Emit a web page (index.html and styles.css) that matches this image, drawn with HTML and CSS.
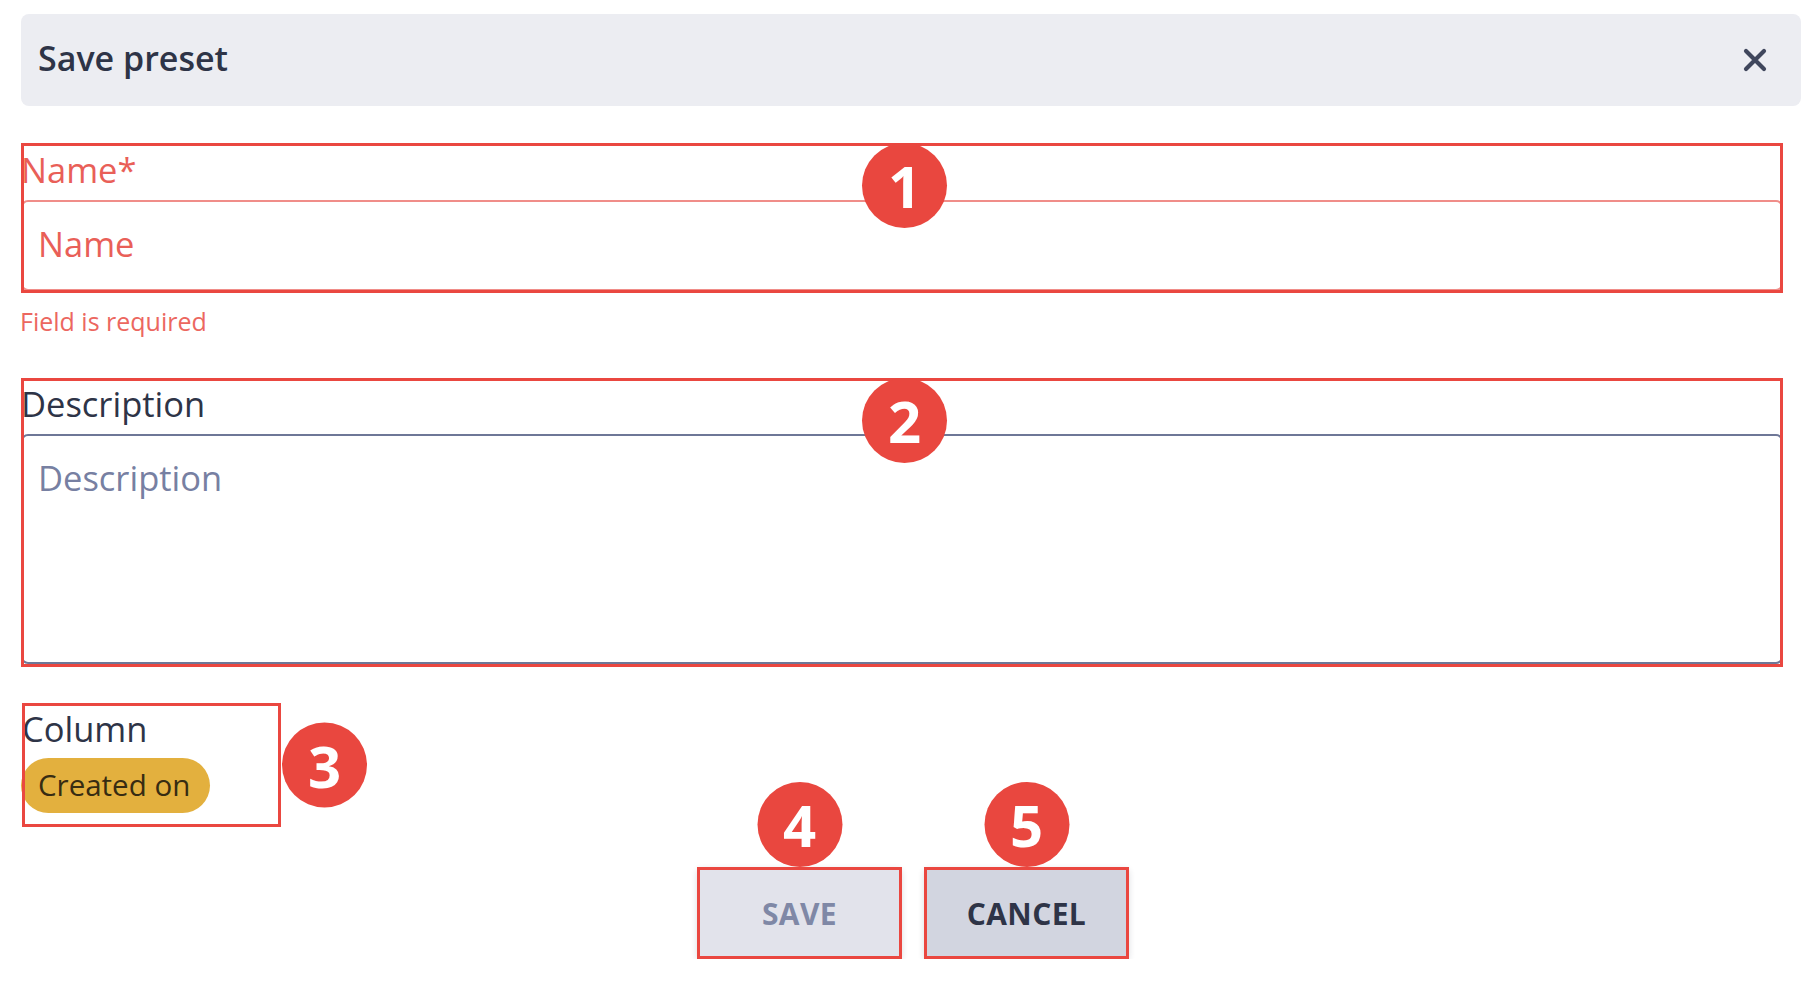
FILE: index.html
```html
<!DOCTYPE html>
<html lang="en">
<head>
<meta charset="utf-8">
<title>Save preset</title>
<link rel="stylesheet" href="styles.css">
</head>
<body>
<div class="modal">
  <header class="modal-header">
    <h1 class="modal-title">Save preset</h1>
    <button class="close-btn" aria-label="Close">
      <svg width="24" height="24" viewBox="0 0 24 24"><path d="M3 3 L21 21 M21 3 L3 21" stroke="#3f465c" stroke-width="4.2" stroke-linecap="round" fill="none"/></svg>
    </button>
  </header>

  <form class="form">
    <div class="mark field field-name">
      <label class="label label-name label-error">Name*</label>
      <input class="input input-error" type="text" placeholder="Name">
      <span class="badge badge-top">1</span>
    </div>
    <div class="error-text">Field is required</div>

    <div class="mark field field-desc">
      <label class="label label-desc">Description</label>
      <textarea class="textarea" placeholder="Description"></textarea>
      <span class="badge badge-top">2</span>
    </div>

    <div class="mark field-column">
      <div class="label label-column">Column</div>
      <span class="chip">Created on</span>
      <span class="badge badge-side">3</span>
    </div>

    <div class="actions">
      <div class="mark btn-wrap">
        <button type="button" class="btn btn-save">SAVE</button>
        <span class="badge badge-above">4</span>
      </div>
      <div class="mark btn-wrap">
        <button type="button" class="btn btn-cancel">CANCEL</button>
        <span class="badge badge-above">5</span>
      </div>
    </div>
  </form>
</div>
</body>
</html>
```

FILE: styles.css
```css
* { box-sizing: border-box; }

html, body {
  margin: 0;
  padding: 0;
  background: #ffffff;
}

body {
  font-family: "Open Sans", "Noto Sans", sans-serif;
  color: #2e3447;
}

.modal {
  padding: 14px 5px 0 21px;
}

/* ---------- header ---------- */
.modal-header {
  height: 92px;
  background: #ecedf2;
  border-radius: 8px;
  display: flex;
  align-items: center;
  justify-content: space-between;
  padding: 0 34px 4px 17px;
}

.modal-title {
  margin: 0;
  font-size: 34px;
  font-weight: 600;
  line-height: 46px;
  color: #2e3447;
}

.close-btn {
  border: 0;
  background: transparent;
  padding: 0;
  margin-top: 4px;
  width: 24px;
  height: 24px;
  display: flex;
  cursor: pointer;
}

/* ---------- form ---------- */
.form {
  width: 1762px;
  display: flex;
  flex-direction: column;
  align-items: flex-start;
  padding-top: 37px;
}

/* red annotation frame drawn over the field edges */
.mark {
  position: relative;
  outline: 3px solid #ea4740;
  outline-offset: -3px;
}

.field {
  width: 100%;
  display: flex;
  flex-direction: column;
}

.field-name {
  padding-bottom: 2px;
}

.field-desc {
  margin-top: 41px;
  padding-bottom: 3px;
}

.label {
  display: block;
  font-size: 34.5px;
  color: #2e3447;
  white-space: nowrap;
}

.label-name {
  height: 57px;
  line-height: 53px;
}

.label-desc {
  height: 56px;
  line-height: 52px;
}

.label-error {
  color: #e95f58;
}

.input {
  display: block;
  width: 100%;
  height: 91px;
  margin: 0;
  border: 2px solid #f08d89;
  border-radius: 7px;
  padding: 0 15px 4px;
  font-family: inherit;
  font-size: 34.5px;
  color: #2e3447;
  background: #fff;
  outline: none;
}

.input-error::placeholder {
  color: #e95f58;
  opacity: 1;
}

.error-text {
  margin-top: 12px;
  margin-left: -1px;
  font-size: 25px;
  line-height: 32px;
  color: #ec6760;
}

.textarea {
  display: block;
  width: 100%;
  height: 230px;
  margin: 0;
  border: 2px solid #6e7797;
  border-radius: 7px;
  padding: 20px 15px;
  font-family: inherit;
  font-size: 34.5px;
  line-height: 44px;
  color: #2e3447;
  background: #fff;
  resize: none;
  outline: none;
}

.textarea::placeholder {
  color: #7780a2;
  opacity: 1;
}

/* ---------- column chip ---------- */
.field-column {
  margin-top: 36px;
  margin-left: 1px;
  width: 259px;
  height: 124px;
}

.label-column {
  height: 55px;
  line-height: 51px;
}

.chip {
  display: inline-flex;
  align-items: center;
  height: 55px;
  margin-left: -1px;
  padding: 0 20px 3px 17px;
  border-radius: 28px;
  background: #e3b03e;
  color: #372c12;
  font-size: 29.5px;
  white-space: nowrap;
}

/* ---------- actions ---------- */
.actions {
  align-self: stretch;
  display: flex;
  justify-content: center;
  gap: 22px;
  margin-top: 40px;
  padding-left: 22px;
}

.btn-wrap {
  width: 205px;
  height: 92px;
}

.btn {
  display: block;
  width: 100%;
  height: 100%;
  border: 0;
  border-radius: 5px;
  font-family: inherit;
  font-size: 30px;
  font-weight: 700;
  letter-spacing: 0.4px;
  box-shadow: 0 2px 6px rgba(40, 45, 70, 0.16);
  cursor: pointer;
}

.btn-save {
  background: #e2e3eb;
  color: #7f88a6;
}

.btn-cancel {
  background: #d2d5e0;
  color: #2e3447;
}

/* ---------- numbered badges ---------- */
.badge {
  position: absolute;
  width: 85px;
  height: 85px;
  border-radius: 50%;
  background: #e9473f;
  color: #ffffff;
  font-family: "Open Sans", sans-serif;
  font-weight: 700;
  font-size: 58px;
  line-height: 85px;
  text-align: center;
  z-index: 2;
}

.badge-top {
  top: 0;
  left: calc(50% - 40px);
}

.badge-side {
  left: calc(100% + 1px);
  top: 50%;
  transform: translateY(-50%);
}

.badge-above {
  left: 50%;
  bottom: 100%;
  transform: translateX(-50%);
}
```
